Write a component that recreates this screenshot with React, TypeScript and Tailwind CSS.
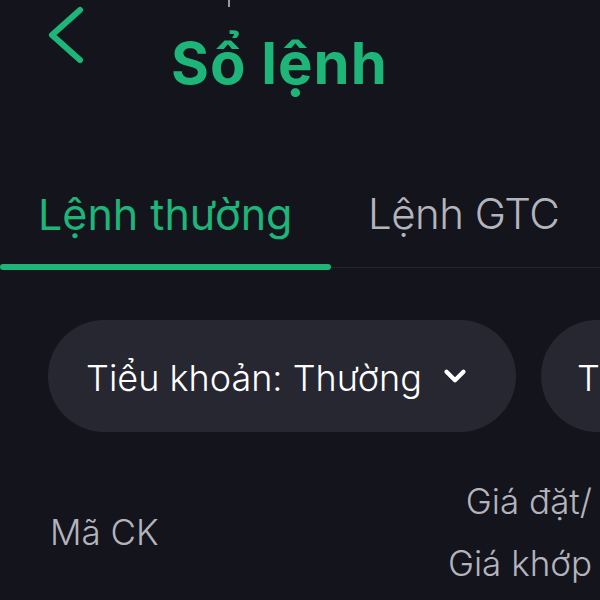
import { ChevronDown } from 'lucide-react';

const font = { fontFamily: 'Inter, "Noto Sans", sans-serif' };

export default function App() {
    return (
        <div className="h-[600px] w-[600px] overflow-hidden bg-[#14141d]" style={font}>
            {/* header */}
            <div className="relative h-[120px]">
                <div className="absolute left-[228px] top-0 h-[7px] w-[2px] bg-[#9a9aa4]" />
                <div className="flex items-start pl-[46px] pt-[6px]">
                    <svg width="42" height="60" viewBox="0 0 42 60" fill="none" className="shrink-0">
                        <path d="M34 4 L6 29 L34 54" stroke="#1db578" strokeWidth="6" strokeLinecap="round" strokeLinejoin="round" />
                    </svg>
                    <h1 className="ml-[83px] mt-[28px] text-[58px] font-bold leading-none tracking-[1px] text-[#1db578]">
                        Sổ lệnh
                    </h1>
                </div>
            </div>

            {/* tabs */}
            <div className="mt-[73px] flex">
                <div className="flex w-[331px] flex-col">
                    <span className="whitespace-nowrap pl-[38px] text-[43px] leading-none text-[#1db578]">Lệnh thường</span>
                    <div className="mt-[28px] h-[6px] rounded-full bg-[#1db578]" />
                </div>
                <div className="flex flex-1 flex-col">
                    <span className="whitespace-nowrap pl-[37px] text-[42px] font-light leading-none tracking-[-0.5px] text-[#b4b4bc]">
                        Lệnh GTC
                    </span>
                    <div className="mt-[32px] h-[1px] bg-[#262630]" />
                </div>
            </div>

            {/* filters */}
            <div className="mt-[50px] flex gap-[25px] pl-[48px]">
                <div className="flex h-[112px] w-[468px] shrink-0 items-center rounded-full bg-[#272731] pl-[38px]">
                    <span className="whitespace-nowrap pt-[4px] text-[36px] font-light text-white">Tiểu khoản: Thường</span>
                    <ChevronDown className="ml-[16px] text-white" size={34} strokeWidth={3} />
                </div>
                <div className="flex h-[112px] w-[260px] shrink-0 items-center rounded-full bg-[#272731] pl-[36px]">
                    <span className="whitespace-nowrap pt-[4px] text-[36px] font-light text-white">Trạng thái</span>
                </div>
            </div>

            {/* column headers */}
            <div className="mt-[38px] flex items-center justify-between pl-[50px] pr-[8px]">
                <span className="text-[35px] font-light text-[#b4b4bc]">Mã CK</span>
                <div className="flex flex-col items-end text-[35px] font-light leading-[62px] text-[#b4b4bc]">
                    <span>Giá đặt/</span>
                    <span>Giá khớp</span>
                </div>
            </div>
        </div>
    );
}
